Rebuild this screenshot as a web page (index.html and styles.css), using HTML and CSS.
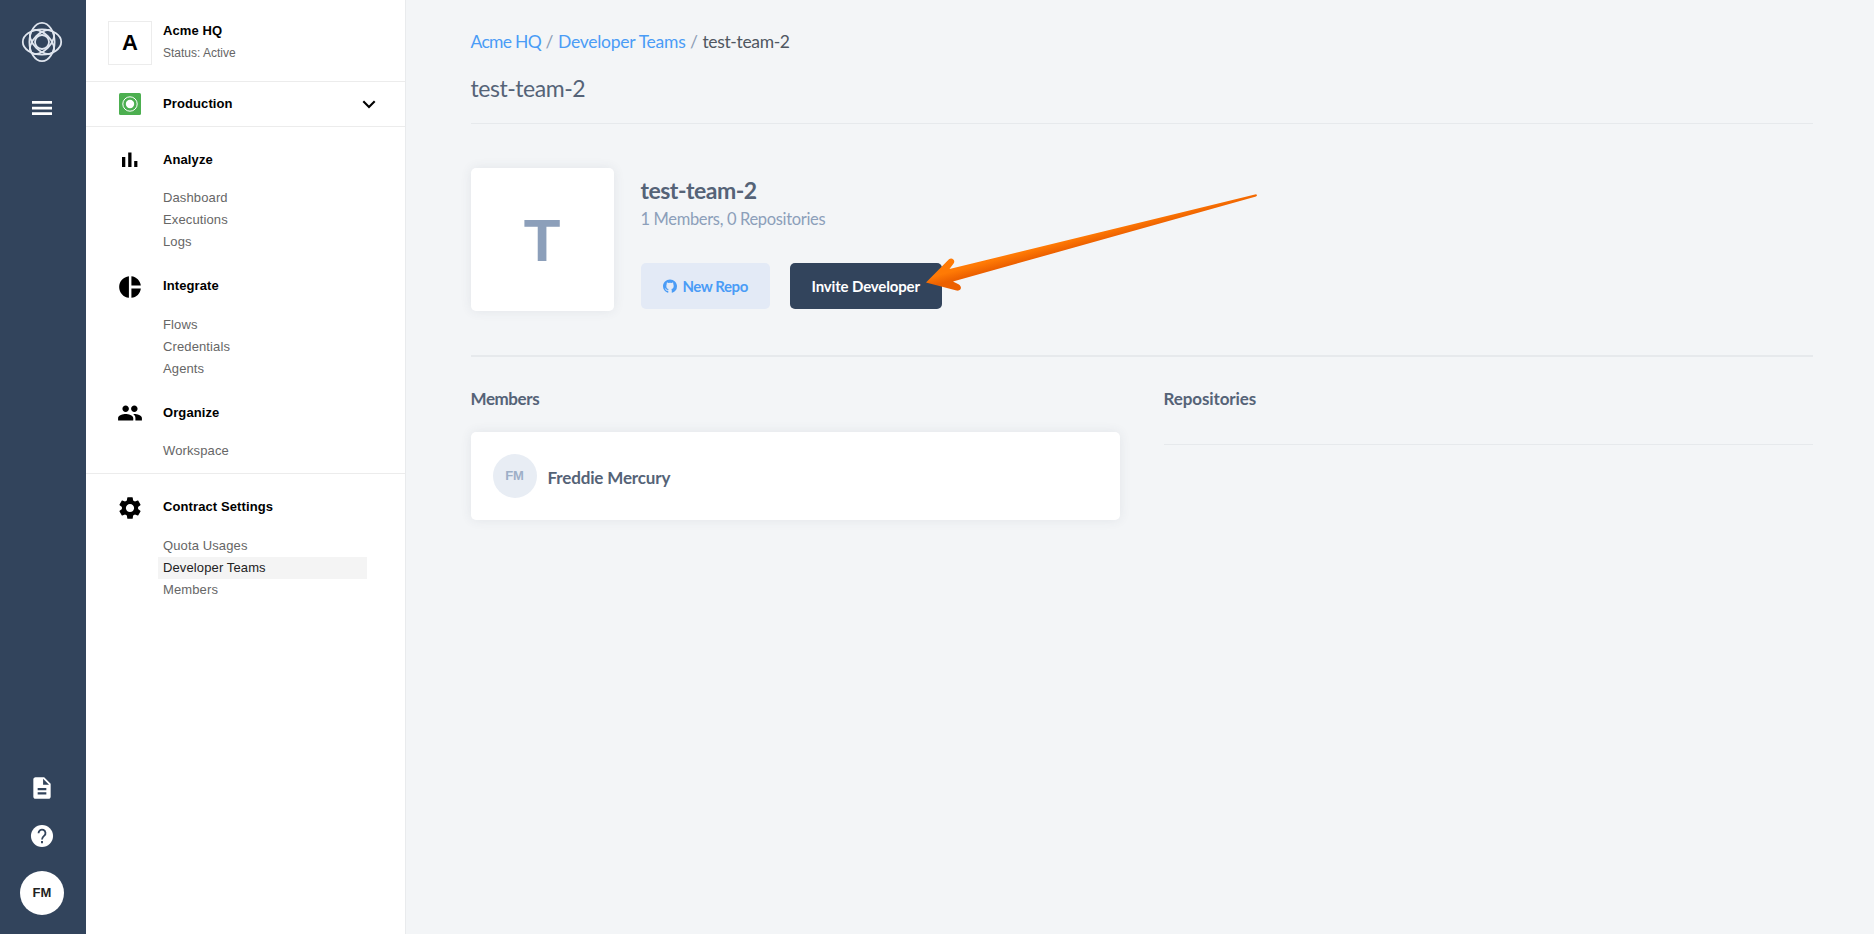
FILE: index.html
```html
<!DOCTYPE html>
<html lang="en">
<head>
<meta charset="utf-8">
<title>test-team-2</title>
<link rel="stylesheet" href="styles.css">
</head>
<body>
<div class="app">
  <nav class="rail">
    <svg class="logo" width="42" height="42" viewBox="-21 -21 42 42" fill="none" stroke="#dfe5ee" stroke-width="1.8">
      <ellipse rx="19.200" ry="12.600"/><ellipse rx="12.600" ry="19.200"/>
      <ellipse rx="15" ry="8.200" transform="rotate(45)"/><ellipse rx="15" ry="8.200" transform="rotate(-45)"/>
      <circle r="7"/>
    </svg>
    <svg class="burger" width="20" height="14" viewBox="0 0 20 14" fill="#fff"><path d="M0 0h20v2.700H0zM0 5.700h20v2.700H0zM0 11.300h20V14H0z"/></svg>
    <div class="rail-bottom">
      <svg width="26" height="26" viewBox="0 0 24 24" fill="#fff"><path d="M14 2H6c-1.100 0-2 .9-2 2v16c0 1.100.9 2 2 2h12c1.100 0 2-.9 2-2V8l-6-6zm2 16H8v-2h8v2zm0-4H8v-2h8v2zm-3-5V3.500L18.500 9H13z"/></svg>
      <svg width="26" height="26" viewBox="0 0 24 24"><circle cx="12" cy="12" r="10.200" fill="#fff"/><path d="M8.800 9.400a3.200 3.200 0 1 1 5.300 2.300c-1.200 1-2.100 1.600-2.100 3.500" fill="none" stroke="#32445c" stroke-width="1.700"/><path d="M11.100 16.700h1.800v1.900h-1.800z" fill="#32445c"/></svg>
      <div class="user">FM</div>
    </div>
  </nav>

  <aside class="sidebar">
    <header class="account">
      <div class="account-logo">A</div>
      <div class="account-text"><strong>Acme HQ</strong><span>Status: Active</span></div>
    </header>
    <div class="workspace">
      <svg width="22" height="22" viewBox="0 0 22 22"><rect width="22" height="22" rx="1.500" fill="#4caf50"/><circle cx="11" cy="11" r="7.200" fill="none" stroke="#fff" stroke-width="1"/><circle cx="11" cy="11" r="4.200" fill="#fff"/></svg>
      <strong>Production</strong>
      <svg class="chevron" width="14" height="9" viewBox="0 0 14 9" fill="none" stroke="#000" stroke-width="2.100"><path d="M1.300 1.300L7 7l5.700-5.700"/></svg>
    </div>
    <section class="group">
      <svg class="icon" width="26" height="26" viewBox="0 0 26 26"><path d="M5 10h3.300v10H5zM11.200 5.600h3.300V20h-3.300zM17.200 14h3.200v6h-3.200z"/></svg>
      <h3>Analyze</h3>
      <ul><li>Dashboard</li><li>Executions</li><li>Logs</li></ul>
    </section>
    <section class="group roomy">
      <svg class="icon" width="26" height="26" viewBox="0 0 24 24"><path d="M11 2v20c-5.070-.5-9-4.790-9-10s3.930-9.500 9-10zm2.300 0v8.700H22c-.47-4.600-4.100-8.230-8.700-8.700zm0 11.300V22c4.600-.47 8.230-4.100 8.700-8.700h-8.700z"/></svg>
      <h3>Integrate</h3>
      <ul><li>Flows</li><li>Credentials</li><li>Agents</li></ul>
    </section>
    <section class="group last">
      <svg class="icon" width="26" height="26" viewBox="0 0 24 24"><path d="M16 11c1.660 0 2.990-1.340 2.990-3S17.660 5 16 5s-3 1.340-3 3 1.340 3 3 3zm-8 0c1.660 0 2.990-1.340 2.990-3S9.660 5 8 5 5 6.340 5 8s1.340 3 3 3zm0 2c-2.330 0-7 1.170-7 3.500V19h14v-2.500c0-2.330-4.670-3.500-7-3.500zm8 0c-.29 0-.62.020-.97.050 1.160.84 1.970 1.970 1.970 3.450V19h6v-2.500c0-2.330-4.670-3.500-7-3.500z"/></svg>
      <h3>Organize</h3>
      <ul><li>Workspace</li></ul>
    </section>
    <section class="group roomy">
      <svg class="icon" width="26" height="26" viewBox="0 0 24 24"><path d="M19.430 12.980c.04-.32.070-.64.070-.98s-.03-.66-.07-.98l2.110-1.650c.19-.15.240-.42.120-.64l-2-3.460c-.12-.22-.39-.3-.61-.22l-2.490 1c-.52-.4-1.080-.73-1.690-.98l-.38-2.650C14.460 2.180 14.250 2 14 2h-4c-.25 0-.46.180-.49.420l-.38 2.650c-.61.250-1.170.59-1.690.98l-2.490-1c-.23-.09-.49 0-.61.220l-2 3.460c-.13.220-.07.490.12.640l2.110 1.650c-.04.320-.07.650-.07.980s.030.660.070.980l-2.110 1.650c-.19.150-.24.420-.12.640l2 3.460c.12.220.39.300.61.220l2.490-1c.52.400 1.080.730 1.690.980l.38 2.650c.03.240.24.420.49.420h4c.25 0 .46-.18.490-.42l.38-2.650c.61-.25 1.170-.59 1.690-.98l2.490 1c.23.090.49 0 .61-.22l2-3.460c.12-.22.070-.49-.12-.64l-2.110-1.650zM12 15.800c-2.100 0-3.800-1.700-3.800-3.800s1.700-3.800 3.800-3.800 3.800 1.700 3.800 3.800-1.700 3.800-3.800 3.800z"/></svg>
      <h3>Contract Settings</h3>
      <ul><li>Quota Usages</li><li class="active">Developer Teams</li><li>Members</li></ul>
    </section>
  </aside>

  <main class="main">
    <div class="crumbs"><a class="crumb-org">Acme HQ</a><i>/</i><a class="crumb-teams">Developer Teams</a><i>/</i><span class="crumb-team">test-team-2</span></div>
    <h1>test-team-2</h1>
    <div class="team">
      <div class="team-logo">T</div>
      <div class="team-info">
        <h2>test-team-2</h2>
        <p>1 Members, 0 Repositories</p>
        <div class="buttons">
          <button class="btn light"><svg width="14" height="14" viewBox="0 0 16 16" fill="#4a9cf6"><path fill-rule="evenodd" d="M8 .5C3.580.5 0 4 0 8.300c0 3.500 2.290 6.400 5.470 7.400.4.070.55-.17.55-.38v-1.900c-2 .4-2.600-.5-2.800-.9-.1-.2-.5-.9-.8-1.100-.3-.2-.7-.5 0-.5.6 0 1.100.6 1.200.8.700 1.200 1.900.9 2.400.7.100-.5.300-.9.500-1.100-1.800-.2-2.700-.9-2.700-3.300 0-.9.100-1.600.6-2.200-.1-.2-.4-1 .1-1.900 0 0 .6-.1 1.800.7a7.600 7.600 0 0 1 3.400 0c1.200-.8 1.800-.7 1.800-.7.400.9.100 1.700.100 1.900.5.600.6 1.300.6 2.200 0 2.400-1.100 3.100-2.700 3.300.3.200.5.700.5 1.500v2.500c0 .2.100.5.500.4A8 8 0 0 0 16 8.300C16 4 12.420.5 8 .5z"/></svg><span>New Repo</span></button>
          <button class="btn dark"><span>Invite Developer</span></button>
        </div>
      </div>
    </div>
    <div class="columns">
      <section>
        <h4 class="members-title">Members</h4>
        <div class="member"><div class="avatar">FM</div><span>Freddie Mercury</span></div>
      </section>
      <section>
        <h4>Repositories</h4>
        <hr>
      </section>
    </div>
  </main>

  <svg class="arrow" width="340" height="104" viewBox="920 190 340 104">
    <defs><linearGradient id="orange" gradientUnits="userSpaceOnUse" x1="1000" y1="255" x2="1003.500" y2="268"><stop offset="0.250" stop-color="#ff7a05"/><stop offset="0.900" stop-color="#ec6000"/></linearGradient></defs>
    <path fill="url(#orange)" d="M926 282.500L949 259.300C951.500 256.800 956 260 953.600 263.500L949.500 269L1256 194.300Q1258 195 1256 196.400L953 281.500L958.500 284.200C962.800 286.800 961 291.500 956.500 290.500Z"/>
  </svg>
</div>
</body>
</html>
```
FILE: styles.css
```css
* { box-sizing: border-box; }
body { margin: 0; font-family: "Liberation Sans", Arial, sans-serif; background: #f3f5f7; }
h1, h2, h3, h4, p, ul { margin: 0; padding: 0; }
.app { display: flex; height: 934px; position: relative; overflow: hidden; }

.rail { width: 86px; background: #32445c; display: flex; flex-direction: column; align-items: center; padding: 21px 2px 19px 0; }
.burger { margin-top: 38px; }
.rail-bottom { margin-top: auto; display: flex; flex-direction: column; align-items: center; gap: 22px; }
.user { width: 44px; height: 44px; border-radius: 50%; background: #fff; color: #222; font-size: 13px; font-weight: bold; line-height: 44px; text-align: center; }

.sidebar { width: 320px; background: #fff; border-right: 1px solid #e9ebed; font-size: 13px; }
.account { height: 82px; border-bottom: 1px solid #ececec; padding: 21px 0 0 22px; display: flex; gap: 11px; }
.account-logo { width: 44px; height: 44px; border: 1px solid #ececec; font-size: 22px; font-weight: bold; line-height: 42px; text-align: center; }
.account-text { display: flex; flex-direction: column; line-height: 22px; margin-top: -1px; }
.account-text span { color: #666; font-size: 12px; }
.account-text strong, .workspace strong, .group h3 { letter-spacing: .1px; }
.workspace { height: 45px; border-bottom: 1px solid #ececec; padding: 0 29px 0 33px; display: flex; align-items: center; }
.workspace strong { margin: -2px 0 0 22px; }
.chevron { margin-left: auto; }
.group { display: grid; grid-template-columns: 77px 1fr; padding-top: 22px; align-items: start; }
.group h3 { font-size: 13px; line-height: 22px; }
.icon { justify-self: center; width: 26px; height: 26px; margin: -2px 0 -2px 10px; }
.group ul { grid-column: 2; list-style: none; margin: 16px 38px 0 -5px; }
.roomy .icon { margin: -1px 0 -3px 10px; }
.roomy ul { margin-top: 17px; }
.group li { height: 22px; line-height: 22px; padding-left: 5px; color: #666; letter-spacing: .12px; }
.group .active { background: #f4f4f4; color: #222; }
.last { padding-bottom: 11px; border-bottom: 1px solid #ececec; }

.main { flex: 1; padding: 30px 61px 0 65px; margin-left: -.5px; font-family: Lato, "Noto Sans", sans-serif; color: #556377; }
.crumbs { display: flex; font-size: 17.500px; line-height: 24px; height: 40px; white-space: nowrap; }
.crumbs a { color: #4a9cf6; }
.crumbs i { font-style: normal; color: #8c9db5; width: 17px; text-align: center; }
.crumbs span { color: #4f5761; }
.crumbs .crumb-org { letter-spacing: -.7px; }
.crumbs .crumb-teams { letter-spacing: -.27px; }
.crumbs .crumb-team { letter-spacing: -.35px; }
h1 { font-size: 23px; font-weight: 400; line-height: 36px; height: 54px; letter-spacing: -.45px; border-bottom: 1px solid #e6e9ec; }
.team { display: flex; gap: 27px; height: 233px; padding-top: 44px; border-bottom: 2px solid #e6e9ec; }
.team-logo { width: 143px; height: 143px; border-radius: 5px; background: #fff; box-shadow: 0 0 12px rgba(50, 68, 92, .09); color: #8c9fba; font: bold 60px/145px "Liberation Sans", Arial, sans-serif; text-align: center; }
.team-info h2 { font-size: 23px; line-height: 30px; margin-top: 7px; letter-spacing: -.5px; }
.team-info p { font-size: 16.500px; line-height: 24px; color: #8c9fba; margin-top: 2px; letter-spacing: -.34px; }
.buttons { display: flex; gap: 20px; margin-top: 32px; }
.btn { height: 46px; border: 0; border-radius: 5px; padding: 0 22px; display: flex; align-items: center; font: bold 15px/46px Lato, "Noto Sans", sans-serif; white-space: nowrap; letter-spacing: -.15px; }
.btn svg { flex: none; }
.light { width: 129px; background: #e3eaf6; color: #4a9cf6; gap: 6px; letter-spacing: -.45px; }
.dark { width: 152px; background: #32445c; color: #fff; }
.columns { display: grid; grid-template-columns: 649px 649px; gap: 44px; padding-top: 30px; }
h4 { font-size: 17px; line-height: 24px; letter-spacing: -.1px; }
.members-title { letter-spacing: -.42px; }
.member { height: 88px; margin-top: 21px; border-radius: 5px; background: #fff; box-shadow: 0 0 12px rgba(50, 68, 92, .09); display: flex; align-items: center; gap: 11px; padding-left: 22px; font-size: 17px; font-weight: bold; letter-spacing: -.15px; }
.member span { margin-top: 2px; }
.avatar { width: 44px; height: 44px; border-radius: 50%; background: #e8edf4; color: #9dafc7; font: bold 13px/44px "Liberation Sans", Arial, sans-serif; text-align: center; }
hr { border: 0; border-top: 1px solid #e6e9ec; margin: 33px 0 0; }

.arrow { position: absolute; left: 920px; top: 190px; }
```
